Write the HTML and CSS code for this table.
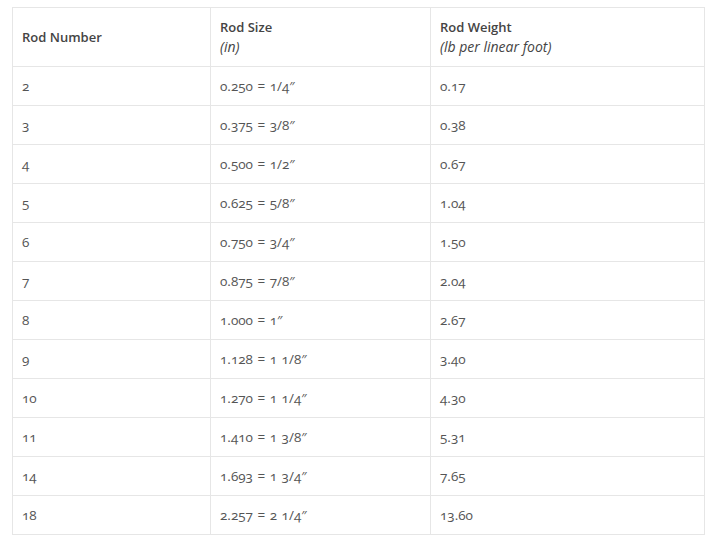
FILE: index.html
```html
<!DOCTYPE html>
<html>
<head>
<meta charset="utf-8">
<link rel="stylesheet" href="styles.css">
</head>
<body>
<table class="rods">
  <thead>
    <tr>
      <th class="c1">Rod Number</th>
      <th class="c2">Rod Size<br><em>(in)</em></th>
      <th class="c3">Rod Weight<br><em>(lb per linear foot)</em></th>
    </tr>
  </thead>
  <tbody>
    <tr><td>2</td><td>0.250 = 1/4&#8243;</td><td>0.17</td></tr>
    <tr><td>3</td><td>0.375 = 3/8&#8243;</td><td>0.38</td></tr>
    <tr><td>4</td><td>0.500 = 1/2&#8243;</td><td>0.67</td></tr>
    <tr><td>5</td><td>0.625 = 5/8&#8243;</td><td>1.04</td></tr>
    <tr><td>6</td><td>0.750 = 3/4&#8243;</td><td>1.50</td></tr>
    <tr><td>7</td><td>0.875 = 7/8&#8243;</td><td>2.04</td></tr>
    <tr><td>8</td><td>1.000 = 1&#8243;</td><td>2.67</td></tr>
    <tr><td>9</td><td>1.128 = 1 1/8&#8243;</td><td>3.40</td></tr>
    <tr><td>10</td><td>1.270 = 1 1/4&#8243;</td><td>4.30</td></tr>
    <tr><td>11</td><td>1.410 = 1 3/8&#8243;</td><td>5.31</td></tr>
    <tr><td>14</td><td>1.693 = 1 3/4&#8243;</td><td>7.65</td></tr>
    <tr><td>18</td><td>2.257 = 2 1/4&#8243;</td><td>13.60</td></tr>
  </tbody>
</table>
</body>
</html>
```
FILE: styles.css
```css
html, body {
  margin: 0;
  padding: 0;
  background: #fff;
}
body {
  padding: 7px 0 0 12px;
  font-family: "Open Sans", "Noto Sans", sans-serif;
  font-size: 13.5px;
  color: #555;
}
.rods {
  border-collapse: collapse;
  width: 693px;
  table-layout: fixed;
}
.rods th, .rods td {
  border: 1px solid #e6e6e6;
  padding: 0 9px;
  text-align: left;
  vertical-align: middle;
  font-variant-numeric: oldstyle-nums;
}
.rods th {
  height: 58px;
  font-size: 13px;
  font-weight: 600;
  color: #444;
  line-height: 20px;
}
.rods th em {
  font-size: 14px;
  font-weight: 400;
  font-style: italic;
  color: #444;
}
.rods td {
  height: 38px;
  line-height: 20px;
  word-spacing: 1px;
}
.c1 { width: 179px; }
.c2 { width: 201px; }
```
